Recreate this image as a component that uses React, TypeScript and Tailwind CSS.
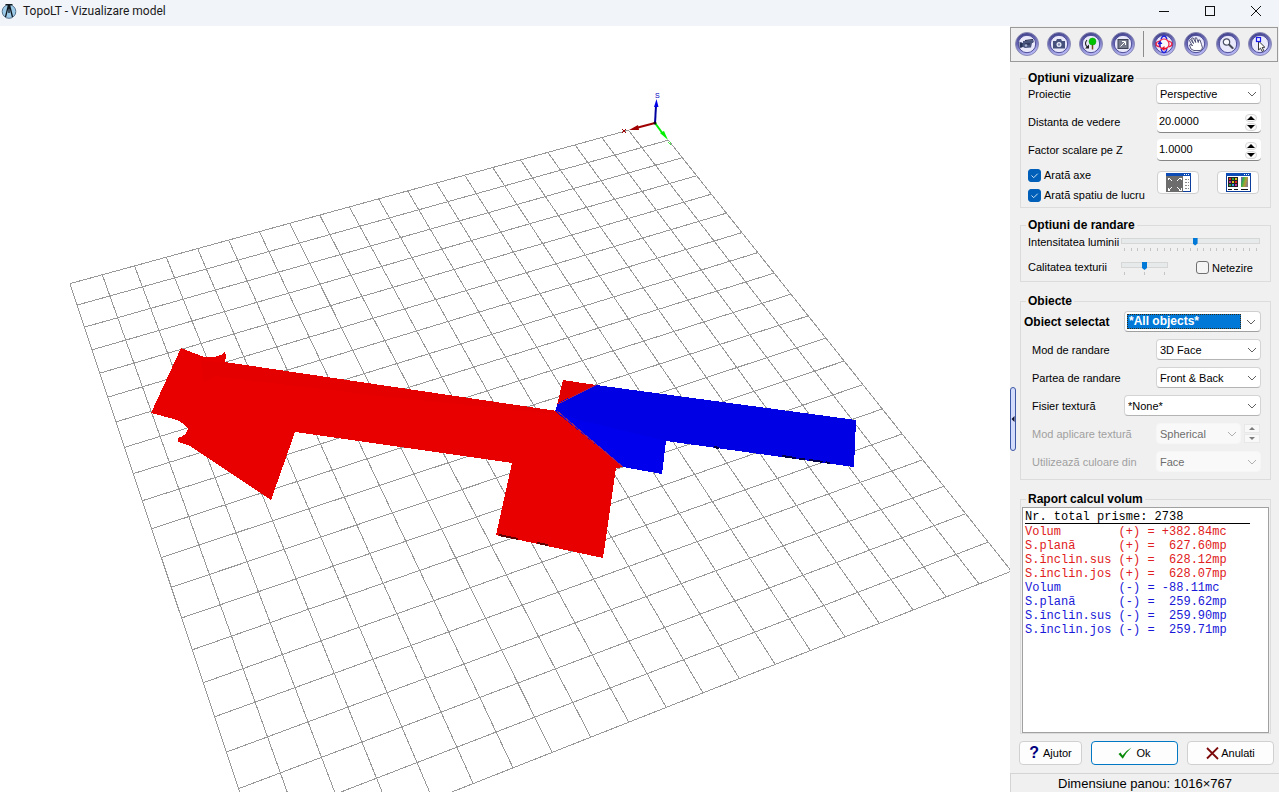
import React, { useState } from "react";

const GRID_STEPS = 20;

// Perspective projection of a floor point (u, v) into viewport coordinates.
function project(u: number, v: number): [number, number] {
  const w = 1 - 0.005316 * u - 0.012236 * v;
  return [(-29.616 * u + 5.461 * v + 654.7) / w, (6.5268 * u + 15.421 * v + 123) / w];
}

const gridLines = Array.from({ length: GRID_STEPS + 1 }, (_, i) => [
  [project(i, i === 0 ? 1 : 0), project(i, GRID_STEPS)],
  [project(i === 0 ? 1 : 0, i), project(GRID_STEPS, i)],
]).flat();

function ModelView() {
  return (
    <svg
      className="h-full w-full bg-white"
      viewBox="0 26 1010 766"
      preserveAspectRatio="xMinYMin slice"
      role="img"
      aria-label="Model 3D"
    >
      <g stroke="#999" strokeWidth="1" shapeRendering="crispEdges">
        {gridLines.map(([a, b], i) => (
          <line key={i} x1={a[0]} y1={a[1]} x2={b[0]} y2={b[1]} />
        ))}
      </g>
      <g shapeRendering="crispEdges">
        <path
          fill="#e80000"
          d="M181 348 L204 357 Q214 358 221 355 L225 351 L226 356 L225 362 L557 411 L623 467 L616 468 L603 558 L496 535 L512 463 L295 432 L271 500 L190 446 L178 442 L178 438 Q187 435 188 429 Q185 423 174 419 L151 413 Z"
        />
        <path fill="#de0000" d="M201 360 L226 363 L557 411 L557 414 L380 396 L215 376 L204 382 Z" opacity="0.3" />
        <path fill="#e00000" d="M563 380 L596 385 L557 405 Z" />
        <path fill="#0000e4" d="M596 385 L856 420 L854 467 L666 441 L662 474 L623 467 L555 411 L558 403 Z" />
        <path fill="#0000f4" d="M575 419 L666 441 L662 474 L623 467 L556 412 Z" opacity="0.6" />
        <path d="M782 456 L830 463" stroke="#00004a" strokeWidth="2" strokeDasharray="14 3 6 4" />
        <path d="M714 447 L719 448" stroke="#00004a" strokeWidth="2" />
        <path d="M499 535 L518 539 M537 543 L548 545" stroke="#600000" strokeWidth="2" />
        <path d="M557 411 L623 467 M558 404 L596 385" stroke="#a02060" strokeWidth="1" />
      </g>
      <path d="M655 123 L636 128" stroke="#a00000" strokeWidth="2" />
      <path d="M629 130 L638 125 L639 130 Z" fill="#a00000" />
      <path d="M622 129 L626 133 M626 129 L622 133" stroke="#a00000" strokeWidth="1" />
      <path d="M655 123 L663 134" stroke="#00f000" strokeWidth="2" />
      <path d="M668 140 L660 133 L664 131 Z" fill="#00f000" />
      <path d="M668 142 L671 145 M671 142 L669 144" stroke="#40f040" strokeWidth="1" />
      <path d="M655 123 L656 106" stroke="#0000a0" strokeWidth="2" />
      <path d="M656.500 99 L658.500 107 L654 107 Z" fill="#0000e8" />
      <circle cx="655" cy="123" r="1.500" fill="#111" />
      <text x="655" y="98" fontSize="7" fill="#0000c0" fontFamily="Liberation Sans, sans-serif">S</text>
    </svg>
  );
}

function Orb({ id, label, children }: { id: string; label: string; children: React.ReactNode }) {
  return (
    <button type="button" aria-label={label} title={label} className="h-6 w-6 shrink-0">
      <svg viewBox="0 0 24 24" className="h-6 w-6">
        <defs>
          <linearGradient id={id} x1="0" y1="0" x2="0.300" y2="1">
            <stop offset="0" stopColor="#34347e" />
            <stop offset="0.500" stopColor="#6a6ab6" />
            <stop offset="1" stopColor="#b4b4f4" />
          </linearGradient>
        </defs>
        <circle cx="12" cy="12" r="11.500" fill={`url(#${id})`} stroke="#8a8ab4" strokeWidth="1" />
        <circle cx="12" cy="12" r="8.700" fill="#e9e9fb" stroke="#4c4c98" strokeWidth="1" />
        {children}
      </svg>
    </button>
  );
}

function Chevron({ className }: { className: string }) {
  return (
    <svg viewBox="0 0 10 6" className={`pointer-events-none absolute right-1 top-1/2 h-1.5 w-2.5 -translate-y-1/2 ${className}`}>
      <path d="M1 1 L5 5 L9 1" fill="none" stroke="currentColor" strokeWidth="1" />
    </svg>
  );
}

function Group({ title, className, children }: { title: string; className: string; children: React.ReactNode }) {
  return (
    <fieldset className={`mx-2.5 mr-2 min-w-0 border border-[#dcdcdc] ${className}`}>
      <legend className="ml-[5px] h-2.5 px-0.5 text-xs font-bold leading-[10px]">{title}</legend>
      {children}
    </fieldset>
  );
}

function Drop({ id, value, width, disabled }: { id: string; value: string; width: string; disabled?: boolean }) {
  return (
    <span className={`relative block h-[21px] ${width}`}>
      <select
        id={id}
        disabled={disabled}
        className="block h-full w-full appearance-none rounded-sm border border-[#d4d4d4] border-b-[#b4b4b4] bg-white pl-[3px] pr-4 pt-px text-[11px] leading-[18px] text-black opacity-100 disabled:border-[#f6f6f6] disabled:bg-[#f9f9f9] disabled:text-[#6d6d6d]"
      >
        <option>{value}</option>
      </select>
      <Chevron className={disabled ? "text-[#b0b0b0]" : "text-[#606060]"} />
    </span>
  );
}

function SpinButtons({ up, down, label }: { up: () => void; down: () => void; label: string }) {
  return (
    <span className="absolute inset-y-0.5 right-[4px] flex w-3 flex-col justify-center gap-px">
      <button type="button" aria-label={`${label} +`} onClick={up} className="flex h-2 items-center justify-center rounded-sm border border-[#d8d8d8] bg-[#fafafa]">
        <svg viewBox="0 0 8 4" className="h-1 w-2 shrink-0"><path d="M0 4 L4 0 L8 4 Z" /></svg>
      </button>
      <button type="button" aria-label={`${label} -`} onClick={down} className="flex h-2 items-center justify-center rounded-sm border border-[#d8d8d8] bg-[#fafafa]">
        <svg viewBox="0 0 8 4" className="h-1 w-2 shrink-0"><path d="M0 0 L4 4 L8 0 Z" /></svg>
      </button>
    </span>
  );
}

function Spin({ id, initial, label }: { id: string; initial: number; label: string }) {
  const [value, setValue] = useState(initial);
  return (
    <span className="relative block h-[22px] w-[104px]">
      <input
        id={id}
        value={value.toFixed(4)}
        onChange={(e) => setValue(Number(e.target.value) || 0)}
        className="block h-full w-full rounded-sm border-b border-[#868686] bg-white pb-0.5 pl-0.5 text-[11px] leading-4"
      />
      <SpinButtons label={label} up={() => setValue(value + 1)} down={() => setValue(value - 1)} />
    </span>
  );
}

function Row({ id, label, children, className = "pl-[7px]" }: { id: string; label: string; children: React.ReactNode; className?: string }) {
  return (
    <div className={`flex h-7 items-start justify-between pr-[9px] ${className}`}>
      <label htmlFor={id} className="text-[11px] leading-[23px]">{label}</label>
      {children}
    </div>
  );
}

function Check({ id, label, initial }: { id: string; label: string; initial: boolean }) {
  const [on, setOn] = useState(initial);
  return (
    <div className="flex h-5 items-center gap-[3px]">
      <span className="relative block h-[13px] w-[13px]">
        <input
          id={id}
          type="checkbox"
          checked={on}
          onChange={() => setOn(!on)}
          className="block h-[13px] w-[13px] appearance-none rounded-[3px] border border-[#707070] bg-[#f5f5f5] checked:border-[#005fb8] checked:bg-[#005fb8]"
        />
        {on && (
          <svg viewBox="0 0 13 13" className="pointer-events-none absolute inset-0">
            <path d="M3.500 6.500 L5.700 8.700 L9.700 4.700" fill="none" stroke="#cfe3f5" strokeWidth="1" />
          </svg>
        )}
      </span>
      <label htmlFor={id} className="whitespace-nowrap text-[11px] leading-4">{label}</label>
    </div>
  );
}

function Slider({ id, max, initial, ticks, width }: { id: string; max: number; initial: number; ticks: number; width: string }) {
  const [value, setValue] = useState(initial);
  return (
    <div className={`flex flex-col gap-0.5 ${width}`}>
      <input
        id={id}
        type="range"
        min={0}
        max={max}
        value={value}
        onChange={(e) => setValue(Number(e.target.value))}
        className="block h-2.5 w-full appearance-none bg-transparent [&::-webkit-slider-runnable-track]:h-1.5 [&::-webkit-slider-runnable-track]:border [&::-webkit-slider-runnable-track]:border-[#d6d6d6] [&::-webkit-slider-runnable-track]:bg-[#e7eaea] [&::-webkit-slider-thumb]:-mt-px [&::-webkit-slider-thumb]:h-2 [&::-webkit-slider-thumb]:w-[5px] [&::-webkit-slider-thumb]:appearance-none [&::-webkit-slider-thumb]:bg-[#0078d7] [&::-webkit-slider-thumb]:[clip-path:polygon(0_0,100%_0,100%_75%,50%_100%,0_75%)]"
      />
      <div className="flex h-[3px] justify-between px-[3px]">
        {Array.from({ length: ticks }, (_, i) => (
          <span key={i} className="w-px bg-[#c4c4c4]" />
        ))}
      </div>
    </div>
  );
}

const report = [
  { color: "text-[#e02020]", text: "Volum        (+) = +382.84mc" },
  { color: "text-[#e02020]", text: "S.planã      (+) =  627.60mp" },
  { color: "text-[#e02020]", text: "S.înclin.sus (+) =  628.12mp" },
  { color: "text-[#e02020]", text: "S.înclin.jos (+) =  628.07mp" },
  { color: "text-[#1818d8]", text: "Volum        (-) = -88.11mc" },
  { color: "text-[#1818d8]", text: "S.planã      (-) =  259.62mp" },
  { color: "text-[#1818d8]", text: "S.înclin.sus (-) =  259.90mp" },
  { color: "text-[#1818d8]", text: "S.înclin.jos (-) =  259.71mp" },
];

function Toolbar() {
  return (
    <div className="mt-px mr-px flex h-[35px] shrink-0 items-center justify-between border border-[#9a9a9a] bg-[#efefef] pb-0.5 pl-1 pr-[5px]">
      <Orb id="orb-video" label="Animatie">
        <path d="M4.500 10 L8 11 L8 15 L4.500 16 Z" fill="#33406c" />
        <path d="M8 9 L18 8 L19 9 L18 11 L17 11 L16 15.500 L10 16 L8 15 Z" fill="#4a557e" />
        <path d="M10 8.500 L18 7.500 M10 12 L15 12 M6 10.500 L6 15.500" stroke="#1d2647" strokeWidth="1" fill="none" />
        <circle cx="11" cy="13.500" r="1.300" fill="#a8b2d4" />
      </Orb>
      <Orb id="orb-photo" label="Captura">
        <path d="M6 9 H9 L10 7 H14 L15 9 H18 V16.500 H6 Z" fill="#47527c" />
        <circle cx="12" cy="12.500" r="2.500" fill="#eceffc" />
        <circle cx="12" cy="12.500" r="1.200" fill="#8089b0" />
      </Orb>
      <Orb id="orb-rotate" label="Roteste obiect">
        <path d="M13.500 12 V17.500" stroke="#7b4a1c" strokeWidth="1.500" />
        <circle cx="13.500" cy="9.500" r="3.500" fill="#00c400" stroke="#009a00" strokeWidth="0.500" />
        <path d="M8 8 Q4.500 12 9 15.500" fill="none" stroke="#222" strokeWidth="1.100" />
        <path d="M10 12.500 V16.500 H6 Z" fill="#222" />
      </Orb>
      <Orb id="orb-full" label="Panou maxim">
        <rect x="7" y="7.500" width="10" height="9" fill="#747a8a" stroke="#3e4456" />
        <path d="M9.500 14.500 L14 10 M11 9.500 H14.500 V13" stroke="#fff" strokeWidth="1" fill="none" />
      </Orb>
      <span className="h-[26px] w-px bg-[#8c8c8c]" />
      <Orb id="orb-orbit" label="Orbita">
        <path d="M9 7.500 Q10 4 12 4 Q14 4 15 7.500 M9 16.500 Q10 20.500 12 20.500 Q14 20.500 15 16.500" fill="none" stroke="#2020e0" strokeWidth="1.300" />
        <path d="M7.500 9 Q4 10 4 12 Q4 14 7.500 15 M16.500 9 Q20 10 20 12 Q20 14 16.500 15" fill="none" stroke="#f02040" strokeWidth="1.300" />
        <circle cx="12" cy="12" r="5" fill="#f8f8ff" stroke="#f02040" strokeWidth="1.200" />
        <path d="M8 8.500 L10.500 12 H5.500 Z M7.300 12 H8.700 V15 H7.300 Z" fill="#1818d8" />
        <path d="M9 16.500 L12.500 14 V19 Z M12 15.800 H15 V17.200 H12 Z" fill="#e81030" />
      </Orb>
      <Orb id="orb-pan" label="Deplasare">
        <path
          d="M7 17 L5.500 13 L7 12.500 L8.500 14 L5.500 8.500 L6.500 7.500 L9.500 11.500 L7.500 6.500 L9 5.800 L11.700 10.500 L11 6 L12.500 5.800 L14.300 10.500 L14.500 8 L16 8 L17.500 12.500 L18.500 16 L16.500 18.500 H10 Z"
          fill="#fff"
          stroke="#30345c"
          strokeWidth="0.800"
          strokeLinejoin="round"
        />
      </Orb>
      <Orb id="orb-zoom" label="Marire">
        <circle cx="10.500" cy="10" r="3.200" fill="#f8faff" stroke="#4a4f66" strokeWidth="1.200" />
        <path d="M13 12.500 L17 16.500" stroke="#5a5f6e" strokeWidth="2.200" />
        <path d="M12.500 12 L17.500 17" stroke="#222" strokeWidth="0.700" />
      </Orb>
      <Orb id="orb-pick" label="Selectare">
        <path d="M10.500 9 V18 L12.500 16.200 L14.200 19.500 L15.800 18.700 L14.200 15.500 L16.800 15.200 Z" fill="#fff" stroke="#222" strokeWidth="0.900" />
        <rect x="8.500" y="5.500" width="4" height="4" fill="#eef" stroke="#1818f0" strokeWidth="1.200" />
      </Orb>
    </div>
  );
}

function SidePanel() {
  return (
    <aside className="relative flex w-[269px] shrink-0 flex-col bg-[#f0f0f0]">
      <button
        type="button"
        aria-label="Ascunde panoul"
        className="absolute left-0 top-[361px] flex h-16 w-1.5 items-center justify-center rounded-sm border border-[#3c58a4] bg-[#d3dcfb]"
      >
        <svg viewBox="0 0 4 6" className="h-1.5 w-1 shrink-0"><path d="M3.500 0 V6 L0.500 3 Z" fill="#101030" /></svg>
      </button>
      <Toolbar />

      <Group title="Optiuni vizualizare" className="mt-[11px]">
        <Row id="proj" label="Proiectie">
          <Drop id="proj" value="Perspective" width="w-[105px]" />
        </Row>
        <Row id="dist" label="Distanta de vedere">
          <Spin id="dist" initial={20} label="Distanta" />
        </Row>
        <Row id="scale" label="Factor scalare pe Z">
          <Spin id="scale" initial={1} label="Factor" />
        </Row>
        <div className="-mt-0.5 flex items-start justify-between pb-0.5 pl-[7px] pr-[11px]">
          <div>
            <Check id="axes" label="Aratã axe" initial />
            <Check id="space" label="Aratã spatiu de lucru" initial />
          </div>
          <div className="flex gap-[18px] pt-1.5">
            <button type="button" aria-label="Incadrare" className="flex h-[23px] w-[42px] items-center justify-center rounded border border-[#d0d0d0] bg-[#fdfdfd]">
              <svg viewBox="0 0 25 19" className="h-[19px] w-[25px]" shapeRendering="crispEdges">
                <rect x="0.500" y="0.500" width="24" height="18" fill="#fff" stroke="#0c3c9c" />
                <rect width="25" height="3" fill="#0c4cb4" />
                <path d="M18 1 h1 v1 h-1z M20 1 h1 v1 h-1z M22 1 h1 v1 h-1z" fill="#fff" />
                <rect x="0" y="3" width="17" height="16" fill="#6c6c6c" />
                <path d="M2 7 V5 H4 M3 5 L6 8 M15 7 V5 H13 M14 5 L11 8 M2 15 V17 H4 M3 17 L6 14 M15 15 V17 H13 M14 17 L11 14" fill="none" stroke="#fff" />
                <path d="M19 6 H23 M19 9 H23 M19 12 H23 M19 15 H23" stroke="#888" strokeDasharray="2 1" />
              </svg>
            </button>
            <button type="button" aria-label="Culori" className="flex h-[23px] w-[42px] items-center justify-center rounded border border-[#d0d0d0] bg-[#fdfdfd]">
              <svg viewBox="0 0 25 19" className="h-[19px] w-[25px]" shapeRendering="crispEdges">
                <defs>
                  <linearGradient id="hue" x1="0" y1="0" x2="1" y2="0.400">
                    <stop offset="0" stopColor="#9040c0" />
                    <stop offset="0.350" stopColor="#30b050" />
                    <stop offset="0.700" stopColor="#b0a030" />
                    <stop offset="1" stopColor="#908080" />
                  </linearGradient>
                </defs>
                <rect x="0.500" y="0.500" width="24" height="18" fill="#fff" stroke="#0c3c9c" />
                <rect width="25" height="3" fill="#0c4cb4" />
                <path d="M18 1 h1 v1 h-1z M20 1 h1 v1 h-1z M22 1 h1 v1 h-1z" fill="#fff" />
                <rect x="2" y="4" width="10" height="10" fill="#222" />
                <path d="M3 5 h2 v2 h-2z M9 8 h2 v2 h-2z" fill="#e02020" />
                <path d="M6 5 h2 v2 h-2z M3 11 h2 v2 h-2z" fill="#20a040" />
                <path d="M9 5 h2 v2 h-2z M6 8 h2 v2 h-2z" fill="#d8c020" />
                <path d="M3 8 h2 v2 h-2z M9 11 h2 v2 h-2z" fill="#c030a0" />
                <path d="M6 11 h2 v2 h-2z" fill="#30a0e0" />
                <rect x="15" y="4" width="7" height="10" fill="url(#hue)" />
                <path d="M2 16.500 H6 M8 16.500 H12 M15 16.500 H22" stroke="#111" />
              </svg>
            </button>
          </div>
        </div>
      </Group>

      <Group title="Optiuni de randare" className="mt-3">
        <div className="flex h-6 items-center justify-between pl-[7px] pr-2.5">
          <label htmlFor="light" className="text-[11px] leading-4">Intensitatea luminii</label>
          <div className="pt-0.5">
            <Slider id="light" max={200} initial={107} ticks={21} width="w-[139px]" />
          </div>
        </div>
        <div className="flex h-[27px] items-center pb-0.5 pl-[7px] pr-2.5">
          <label htmlFor="quality" className="w-[93px] text-[11px] leading-4">Calitatea texturii</label>
          <div className="pt-0.5">
            <Slider id="quality" max={2} initial={1} ticks={3} width="w-[47px]" />
          </div>
          <div className="ml-7 pt-0.5">
            <Check id="smooth" label="Netezire" initial={false} />
          </div>
        </div>
      </Group>

      <Group title="Obiecte" className="mt-3.5">
        <div className="mb-0.5 flex h-[31px] items-center justify-between pl-[3px] pr-[9px]">
          <label htmlFor="object" className="text-xs font-bold">Obiect selectat</label>
          <span className="relative block h-[21px] w-[137px] rounded-sm border border-[#cfcfcf] border-b-[#a0a0a0] bg-white py-0.5 pl-0.5 pr-[19px]">
            <select id="object" className="block h-[15px] w-full appearance-none border border-dotted border-[#3a2a10] bg-[#0078d7] pl-px text-xs font-bold leading-[13px] text-white">
              <option>*All objects*</option>
            </select>
            <Chevron className="text-[#606060]" />
          </span>
        </div>
        <Row id="mode" label="Mod de randare" className="pl-[11px]">
          <Drop id="mode" value="3D Face" width="w-[105px]" />
        </Row>
        <Row id="side" label="Partea de randare" className="pl-[11px]">
          <Drop id="side" value="Front & Back" width="w-[105px]" />
        </Row>
        <Row id="texture" label="Fisier texturã" className="pl-[11px]">
          <Drop id="texture" value="*None*" width="w-[137px]" />
        </Row>
        <Row id="apply" label="Mod aplicare texturã" className="pl-[11px] text-[#a0a0a0]">
          <span className="flex w-[105px] items-center justify-between pr-px">
            <Drop id="apply" value="Spherical" width="w-[85px]" disabled />
            <span className="flex w-4 flex-col gap-px">
              <button type="button" disabled aria-label="Sus" className="flex h-[9px] items-center justify-center border border-[#e8e8e8] bg-[#f8f8f8]">
                <svg viewBox="0 0 6 3" className="h-[3px] w-1.5"><path d="M0 3 L3 0 L6 3 Z" fill="#7c7c7c" /></svg>
              </button>
              <button type="button" disabled aria-label="Jos" className="flex h-[9px] items-center justify-center border border-[#e8e8e8] bg-[#f8f8f8]">
                <svg viewBox="0 0 6 3" className="h-[3px] w-1.5"><path d="M0 0 L3 3 L6 0 Z" fill="#7c7c7c" /></svg>
              </button>
            </span>
          </span>
        </Row>
        <Row id="color" label="Utilizeazã culoare din" className="pl-[11px] text-[#a0a0a0]">
          <Drop id="color" value="Face" width="w-[105px]" disabled />
        </Row>
      </Group>

      <Group title="Raport calcul volum" className="mt-3.5 flex-1">
        <div className="h-full pt-[3px] pl-px pr-px">
          <div className="h-full overflow-hidden border border-[#a0a0a0] bg-white px-0.5 pt-[3px] font-['Liberation_Mono',monospace] text-[12px] leading-[14px]">
            <p className="mr-4 h-[13px] border-b border-black leading-3">Nr. total prisme: 2738</p>
            <div className="pt-px">
              {report.map((line, i) => (
                <p key={i} className={`whitespace-pre ${line.color}`}>{line.text}</p>
              ))}
            </div>
          </div>
        </div>
      </Group>

      <div className="mt-[7px] flex shrink-0 gap-[9px] pl-[9px] pr-[5px] text-[11px]">
        <button type="button" className="flex h-6 w-[63px] items-center justify-center gap-1 rounded border border-[#d0d0d0] bg-[#fdfdfd]">
          <span className="text-base font-bold leading-4 text-[#000080]">?</span>
          Ajutor
        </button>
        <button type="button" className="flex h-6 w-[87px] items-center justify-center gap-1 rounded border border-[#0078c4] bg-[#fdfdfd]">
          <svg viewBox="0 0 14 12" className="h-3 w-3.5"><path d="M0.500 7 L2.500 5.500 L4.500 8.500 Q8 3.500 13.500 0.500 Q8 5.500 4.800 11.800 Z" fill="#0a8a0a" /></svg>
          Ok
        </button>
        <button type="button" className="flex h-6 flex-1 items-center justify-center gap-0.5 rounded border border-[#d0d0d0] bg-[#fdfdfd]">
          <svg viewBox="0 0 13 13" className="h-[13px] w-[13px]"><path d="M1 1 L12 12 M12 0.500 L1 11.500" fill="none" stroke="#7c0a0a" strokeWidth="1.800" /></svg>
          Anulati
        </button>
      </div>
      <footer className="mt-2 flex h-[19px] shrink-0 items-center justify-center border-t border-l border-[#d4d4d4] pt-px text-[13px] leading-4">
        Dimensiune panou: 1016×767
      </footer>
    </aside>
  );
}

export default function App() {
  return (
    <div className="flex h-screen flex-col overflow-hidden bg-white font-['Liberation_Sans',Arial,sans-serif] text-black">
      <header className="flex h-[26px] shrink-0 items-center bg-[#f1f4f9]">
        <svg viewBox="0 0 16 16" className="ml-px mb-[5px] h-4 w-4">
          <circle cx="8" cy="8.500" r="6.800" fill="#9ccbea" stroke="#56718c" />
          <path d="M4.500 1 H11.500 V2.300 H4.500 Z" fill="#101820" />
          <path d="M7.500 2 L4.500 14 M8.500 2 L11.500 14 M8 2 V10" fill="none" stroke="#101820" strokeWidth="1.300" />
        </svg>
        <h1 className="mb-[5px] ml-1.5 flex-1 font-[Roboto,'Noto_Sans',sans-serif] text-[12px] leading-4 text-[#1a1a1a]">
          TopoLT - Vizualizare model
        </h1>
        <div className="mb-[5px] flex">
          <button type="button" aria-label="Minimizare" className="flex h-5 w-[46px] items-center justify-center">
            <svg viewBox="0 0 12 12" className="h-3 w-3"><path d="M1 6.500 H11" stroke="#111" /></svg>
          </button>
          <button type="button" aria-label="Maximizare" className="flex h-5 w-[46px] items-center justify-center">
            <svg viewBox="0 0 12 12" className="h-3 w-3"><rect x="1.500" y="1.500" width="9" height="9" fill="none" stroke="#111" /></svg>
          </button>
          <button type="button" aria-label="Inchidere" className="flex h-5 w-[46px] items-center justify-center">
            <svg viewBox="0 0 12 12" className="h-3 w-3"><path d="M1 1 L11 11 M11 1 L1 11" stroke="#111" /></svg>
          </button>
        </div>
      </header>
      <div className="flex min-h-0 flex-1">
        <main className="min-w-0 flex-1 overflow-hidden">
          <ModelView />
        </main>
        <SidePanel />
      </div>
    </div>
  );
}
